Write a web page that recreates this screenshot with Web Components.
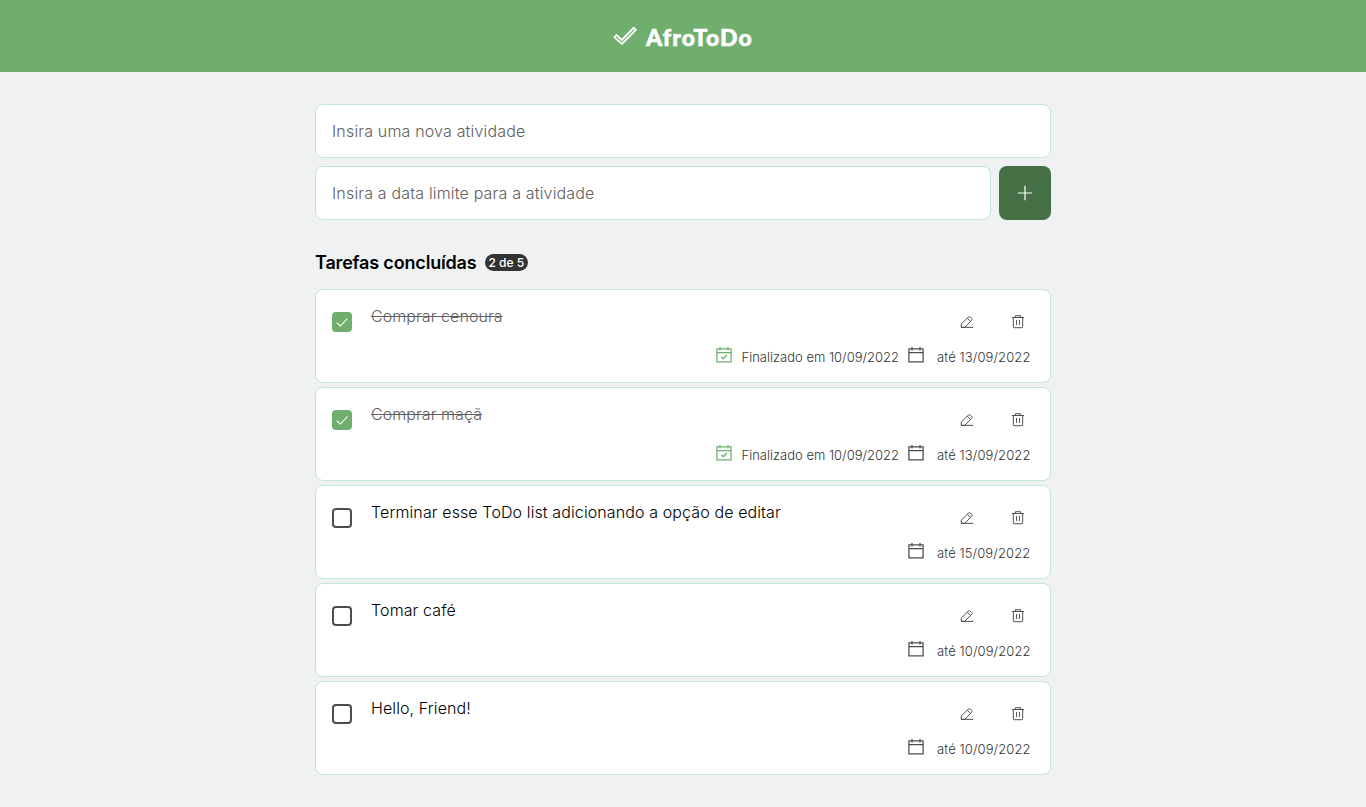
<!DOCTYPE html>
<html lang="pt-BR">
<head>
<meta charset="utf-8">
<title>AfroToDo</title>
<style>
body{margin:0;background:#eff1f3;font-family:Inter,sans-serif;font-size:16px;color:#000}
</style>
</head>
<body>
<todo-app></todo-app>
<script>
const define=(name,html,after)=>customElements.define(name,class extends HTMLElement{
  connectedCallback(){
    if(this.shadowRoot)return;
    this.attachShadow({mode:'open'}).innerHTML=html;
    if(after)after(this,this.shadowRoot);
  }
});
const icons={
  logo:'<path d="M1.4 13.3 3.5 11.1 8.8 15.9 20.7 3.8 22.8 5.9 8.9 20Z" stroke-width="1.8"/>',
  plus:'<path d="M12 4.8v14.4M4.8 12h14.4" stroke-width="1.2"/>',
  check:'<path d="M4 13 9.5 18 20 7" stroke-width="1.6"/>',
  calendar:'<path d="M3.5 4.5h17v15.8h-17ZM3.5 9h17M7.2 2.3v4.4M16.8 2.3v4.4" stroke-width="1.5"/>',
  done:'<path d="M3.5 4.5h17v15.8h-17ZM3.5 9h17M7.2 2.3v4.4M16.8 2.3v4.4M8.7 14.2 11.2 16.5 15.5 12" stroke-width="1.5"/>',
  edit:'<path d="M2.2 21.2v-5.5L14.3 3.6q1.7-1.7 3.4 0l2.3 2.3q1.7 1.7 0 3.4L8 21.2ZM12.5 5.5l5.8 5.8M2.2 21.2h20.5" stroke-width="1.7"/>',
  trash:'<path d="M1.7 4.3h20.6M7.5 4V1.2h9V4M4 4.3V20.4q0 1.4 1.4 1.4h13.2q1.4 0 1.4-1.4V4.3M9.5 8.5V17M14.5 8.5V17" stroke-width="1.7"/>'
};
define('ui-icon','<style>:host{display:block;flex:none;width:24px;height:24px}svg{display:block;width:100%;height:100%;fill:none;stroke:currentColor;stroke-linejoin:miter}</style><svg viewBox="0 0 24 24"></svg>',
  (el,r)=>{r.querySelector('svg').innerHTML=icons[el.getAttribute('name')]});
define('app-header',`<style>
:host{display:flex;height:72px;background:#70ae6e;color:#fff;align-items:center;justify-content:center;gap:9px;box-sizing:border-box}
span{font:900 23px/28px Lato,sans-serif;letter-spacing:1.2px;padding-top:1px;-webkit-text-stroke:.6px #fff}
</style><ui-icon name="logo"></ui-icon><span><slot></slot></span>`);
define('text-field',`<style>
:host{display:block;min-width:0}
input{display:block;width:100%;height:54px;box-sizing:border-box;padding:0 16px;border:1px solid #c5e6cf;border-radius:8px;background:#fff;font:300 16px Inter,sans-serif;letter-spacing:.17px;outline:0}
input::placeholder{color:#606060;opacity:1}
</style><input type="text">`,(el,r)=>{r.querySelector('input').placeholder=el.getAttribute('label')});
define('add-button',`<style>
:host{display:block;width:52px;height:54px}
button{display:flex;align-items:center;justify-content:center;width:100%;height:100%;border:0;padding:0;border-radius:8px;background:#456f44;color:#fff}
</style><button aria-label="Adicionar"><ui-icon name="plus"></ui-icon></button>`);
define('task-form',`<style>
:host{display:grid;grid-template-columns:1fr 52px;gap:8px}
.full{grid-column:1/-1}
</style><text-field class="full" label="Insira uma nova atividade"></text-field>
<text-field label="Insira a data limite para a atividade"></text-field><add-button></add-button>`);
define('list-heading',`<style>
:host{display:flex;align-items:center;gap:8px;height:22px;margin:32px 0 15px}
h2{margin:0;font-size:18px;line-height:22px;font-weight:600;letter-spacing:-.17px}
b{display:block;height:17px;margin-bottom:1px;border-radius:9px;padding:0 4px;background:#333;color:#fff;font-size:12px;line-height:17px;font-weight:500}
</style><h2><slot></slot></h2><b><slot name="count"></slot></b>`);
define('check-box',`<style>
:host{display:flex;width:20px;height:20px;box-sizing:border-box;border:2px solid #4d4d4d;border-radius:4px;align-items:center;justify-content:center}
:host([checked]){background:#70ae6e;border-color:#70ae6e;color:#fff}
ui-icon{display:none;width:16px;height:16px}
:host([checked]) ui-icon{display:block}
</style><ui-icon name="check"></ui-icon>`);
define('task-card',`<style>
:host{display:grid;grid-template-columns:20px 1fr auto;grid-template-rows:36px 20px;column-gap:19px;height:94px;box-sizing:border-box;padding:16px 19px 0 16px;border:1px solid #c5e6cf;border-radius:8px;background:#fff;color:#4d4d4d}
check-box{margin-top:6px}
.title{font-weight:300;line-height:20px;color:#000;letter-spacing:.11px}
:host([done]) .title{color:#606060;text-decoration:line-through;letter-spacing:.07px}
.actions{display:flex;gap:37px;padding:9px 6px 0 0}
.actions ui-icon{width:14px;height:14px}
.dates{grid-column:1/-1;display:flex;justify-content:flex-end;font-size:13px;line-height:16px;font-weight:300;color:#333}
.dates ui-icon{width:20px;height:20px;margin-top:3px;color:#4d4d4d}
.dates span{padding-top:7px}
.end{margin:0 7px 0 8px;display:none}
:host([done]) .end{display:block}
.dates ui-icon.fin{display:none;color:#70ae6e}
:host([done]) .dates .fin{display:block}
.due{width:94px;margin-left:11px;letter-spacing:.11px;white-space:nowrap}
</style><check-box></check-box><div class="title"><slot></slot></div>
<div class="actions"><ui-icon name="edit"></ui-icon><ui-icon name="trash"></ui-icon></div>
<div class="dates"><ui-icon class="fin" name="done"></ui-icon><span class="end"></span><ui-icon name="calendar"></ui-icon><span class="due"></span></div>`,(el,r)=>{
  const done=el.getAttribute('done');
  if(done){r.querySelector('check-box').setAttribute('checked','');r.querySelector('.end').textContent='Finalizado em '+done}
  r.querySelector('.due').textContent='até '+el.getAttribute('due');
});
define('todo-app',`<style>
:host{display:block}
main{width:736px;margin:0 auto;padding-top:32px}
.list{display:grid;gap:4px}
</style><app-header>AfroToDo</app-header>
<main><task-form></task-form>
<list-heading>Tarefas concluídas<span slot="count">2 de 5</span></list-heading>
<div class="list">
<task-card done="10/09/2022" due="13/09/2022">Comprar cenoura</task-card>
<task-card done="10/09/2022" due="13/09/2022">Comprar maçã</task-card>
<task-card due="15/09/2022">Terminar esse ToDo list adicionando a opção de editar</task-card>
<task-card due="10/09/2022">Tomar café</task-card>
<task-card due="10/09/2022">Hello, Friend!</task-card>
</div></main>`);
</script>
</body>
</html>
